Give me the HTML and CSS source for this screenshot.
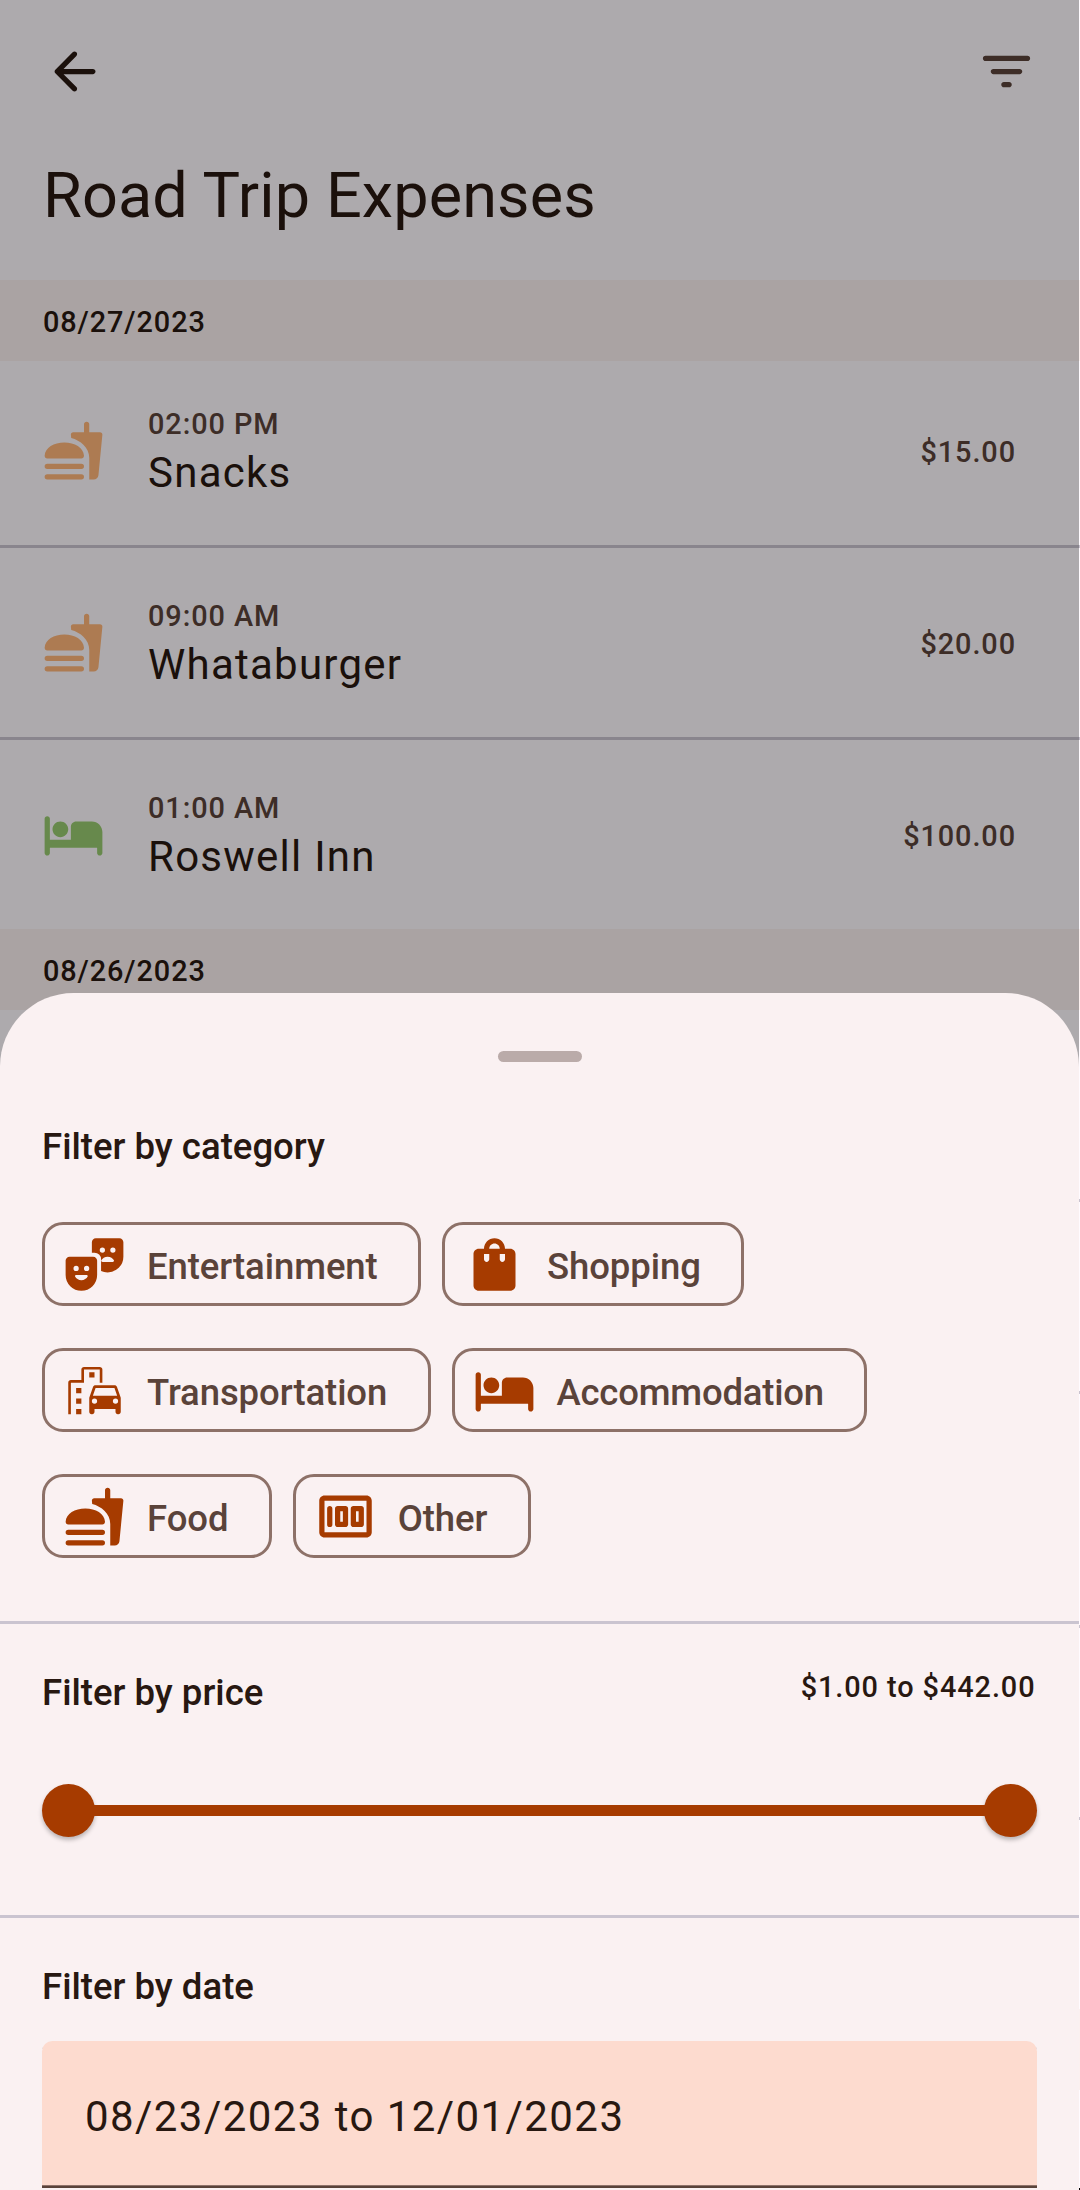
FILE: index.html
```html
<!DOCTYPE html>
<html lang="en">
<head>
<meta charset="utf-8">
<title>Road Trip Expenses</title>
<link rel="stylesheet" href="styles.css">
</head>
<body>
<svg class="sprite" aria-hidden="true">
  <symbol id="back" viewBox="0 0 24 24"><path d="M19 11H7.83l4.88-4.88c.39-.39.39-1.03 0-1.42-.39-.39-1.02-.39-1.41 0l-6.59 6.59c-.39.39-.39 1.02 0 1.41l6.59 6.59c.39.39 1.02.39 1.41 0 .39-.39.39-1.02 0-1.41L7.83 13H19c.55 0 1-.45 1-1s-.45-1-1-1z"/></symbol>
  <symbol id="filter" viewBox="0 0 24 24"><path d="M11 18h2c.55 0 1-.45 1-1s-.45-1-1-1h-2c-.55 0-1 .45-1 1s.45 1 1 1zM3 7c0 .55.45 1 1 1h16c.55 0 1-.45 1-1s-.45-1-1-1H4c-.55 0-1 .45-1 1zm4 6h10c.55 0 1-.45 1-1s-.45-1-1-1H7c-.55 0-1 .45-1 1s.45 1 1 1z"/></symbol>
  <symbol id="food" viewBox="0 0 24 24"><path d="M22.1 5H18V2c0-.55-.45-1-1-1s-1 .45-1 1v3h-4.1c-.55 0-.95.45-.9 1l.13 1.28C14.6 8.2 18 10.9 18 14.9V23h1.7c.95 0 1.7-.7 1.8-1.6L23 6c.05-.55-.35-1-.9-1zM15 15H2c-.6 0-1-.4-1-1 .2-3 3.5-5.01 7.5-5.01S15.8 11 16 14c0 .6-.4 1-1 1zM2 17h13a1 1 0 0 1 0 2H2a1 1 0 0 1 0-2zM2 21h13a1 1 0 0 1 0 2H2a1 1 0 0 1 0-2z"/></symbol>
  <symbol id="bed" viewBox="0 0 24 24"><path d="M7 13c1.65 0 3-1.35 3-3S8.65 7 7 7s-3 1.35-3 3 1.35 3 3 3zm12-6h-6c-1.1 0-2 .9-2 2v5H3V6c0-.55-.45-1-1-1s-1 .45-1 1v13c0 .55.45 1 1 1s1-.45 1-1v-2h18v2c0 .55.45 1 1 1s1-.45 1-1v-8c0-2.21-1.79-4-4-4z"/></symbol>
  <symbol id="masks" viewBox="0 0 24 24"><path fill-rule="evenodd" d="M2.5 9h9c.83 0 1.500.67 1.500 1.500V16a6 6 0 0 1-12 0v-5.500C1 9.670 1.670 9 2.500 9zM5 12.500a1 1 0 1 0 0 2 1 1 0 0 0 0-2zm4 0a1 1 0 1 0 0 2 1 1 0 0 0 0-2zM5.100 16c-.4 0-.6.300-.5.600.4.800 1.300 1.400 2.400 1.400s2-.6 2.400-1.400c.1-.3-.1-.6-.5-.6zM12.500 2h9c.83 0 1.500.67 1.500 1.500V9a6 6 0 0 1-6 6c-.9 0-1.760-.2-2.500-.55V10a2.500 2.500 0 0 0-2.500-2.500h-1v-4c0-.83.67-1.500 1.500-1.500zM15 5.500a1 1 0 1 0 0 2 1 1 0 0 0 0-2zm4 0a1 1 0 1 0 0 2 1 1 0 0 0 0-2zM15.100 11h3.800c.4 0 .6-.3.500-.6-.4-.8-1.300-1.400-2.400-1.400s-2 .6-2.400 1.400c-.1.300.1.600.5.600z"/></symbol>
  <symbol id="bag" viewBox="0 0 24 24"><path d="M18 6h-2c0-2.21-1.79-4-4-4S8 3.79 8 6H6c-1.1 0-2 .9-2 2v12c0 1.1.9 2 2 2h12c1.1 0 2-.9 2-2V8c0-1.100-.9-2-2-2zm-8 4c0 .55-.45 1-1 1s-1-.45-1-1V8h2v2zm2-6c1.100 0 2 .9 2 2h-4c0-1.100.9-2 2-2zm4 6c0 .55-.45 1-1 1s-1-.45-1-1V8h2v2z"/></symbol>
  <symbol id="transport" viewBox="0 0 24 24"><path fill-rule="evenodd" d="M20.57 10.66c-.14-.4-.52-.66-.97-.66h-7.190c-.46 0-.83.26-.98.66L10 14.770V20.100c0 .5.400.900.900.900h.200c.5 0 .9-.4.9-.9V19h8v1.100c0 .5.400.900.900.900h.200c.5 0 .9-.4.9-.9v-5.330zM12.410 11h7.190l1.030 3h-9.250zM12 15a1 1 0 1 1 0 2 1 1 0 0 1 0-2zm8 0a1 1 0 1 1 0 2 1 1 0 0 1 0-2z"/><path d="M14 9h1V4c0-.55-.45-1-1-1H8c-.55 0-1 .45-1 1v4H3c-.55 0-1 .45-1 1v12h1V9h5V4h6zM5 11h2v2H5zm5-6h2v2h-2zM5 15h2v2H5zm0 4h2v2H5z"/></symbol>
  <symbol id="cash" viewBox="0 0 24 24"><path fill-rule="evenodd" d="M4 4h16c1.100 0 2 .9 2 2v12c0 1.100-.9 2-2 2H4c-1.100 0-2-.9-2-2V6c0-1.100.9-2 2-2zm0 2v12h16V6zM6 8c.55 0 1 .45 1 1v6a1 1 0 0 1-2 0V9c0-.55.45-1 1-1zM9 8h3c.55 0 1 .45 1 1v6c0 .55-.45 1-1 1H9c-.55 0-1-.45-1-1V9c0-.55.45-1 1-1zm1 2v4h1v-4zM15 8h3c.55 0 1 .45 1 1v6c0 .55-.45 1-1 1h-3c-.55 0-1-.45-1-1V9c0-.55.45-1 1-1zm1 2v4h1v-4z"/></symbol>
</svg>

<main class="app">
  <header class="top">
    <div class="actions">
      <svg class="icon"><use href="#back"/></svg>
      <svg class="icon muted"><use href="#filter"/></svg>
    </div>
    <h1 class="title">Road Trip Expenses</h1>
  </header>
  <h2 class="day pinned">08/27/2023</h2>
  <article class="row first">
    <svg class="icon orange"><use href="#food"/></svg>
    <div class="entry"><span class="time">02:00 PM</span><span class="name">Snacks</span></div>
    <span class="amount">$15.00</span>
  </article>
  <article class="row divided">
    <svg class="icon orange"><use href="#food"/></svg>
    <div class="entry"><span class="time">09:00 AM</span><span class="name">Whataburger</span></div>
    <span class="amount">$20.00</span>
  </article>
  <article class="row divided">
    <svg class="icon green"><use href="#bed"/></svg>
    <div class="entry"><span class="time">01:00 AM</span><span class="name">Roswell Inn</span></div>
    <span class="amount">$100.00</span>
  </article>
  <h2 class="day">08/26/2023</h2>
  <div class="row"></div>
  <div class="row divided"></div>
  <div class="row divided tall"></div>
  <div class="row divided"></div>
  <div class="row divided"></div>
  <div class="day"></div>
  <div class="nav-edge"></div>
</main>

<div class="scrim"></div>

<section class="sheet">
  <div class="handle"></div>
  <div class="section categories">
    <h3 class="label">Filter by category</h3>
    <div class="chips">
      <div class="chip-row">
        <button class="chip"><svg class="icon"><use href="#masks"/></svg><span>Entertainment</span></button>
        <button class="chip"><svg class="icon"><use href="#bag"/></svg><span>Shopping</span></button>
      </div>
      <div class="chip-row">
        <button class="chip"><svg class="icon"><use href="#transport"/></svg><span>Transportation</span></button>
        <button class="chip long"><svg class="icon"><use href="#bed"/></svg><span>Accommodation</span></button>
      </div>
      <div class="chip-row">
        <button class="chip"><svg class="icon"><use href="#food"/></svg><span>Food</span></button>
        <button class="chip"><svg class="icon"><use href="#cash"/></svg><span>Other</span></button>
      </div>
    </div>
  </div>
  <div class="section price">
    <div class="price-head">
      <h3 class="label">Filter by price</h3>
      <span class="range">$1.00 to $442.00</span>
    </div>
    <div class="slider"><i class="thumb"></i><i class="track"></i><i class="thumb"></i></div>
  </div>
  <div class="section date">
    <h3 class="label">Filter by date</h3>
    <div class="field">08/23/2023 to 12/01/2023</div>
  </div>
</section>
</body>
</html>
```
FILE: styles.css
```css
* { box-sizing: border-box; margin: 0; padding: 0; }

body {
  position: relative;
  width: 1080px;
  height: 2190px;
  overflow: hidden;
  background: #fffbff;
  color: #281811;
  font-family: Roboto, "Liberation Sans", sans-serif;
}

.sprite { display: none; }

.icon {
  display: block;
  flex: none;
  width: 63px;
  height: 63px;
  fill: currentColor;
}

.muted { color: #5a433a; }
.orange { color: #ffb679; }
.green { color: #99cb70; }

.app {
  display: flex;
  flex-direction: column;
  height: 2190px;
  isolation: isolate;
}

.top { flex: none; height: 280px; padding-top: 40px; }
.actions { display: flex; justify-content: space-between; padding: 0 42px 0 43px; }

.title {
  margin: 53px 0 0 43px;
  font-size: 63px;
  font-weight: 400;
  line-height: 80px;
  letter-spacing: .1px;
}

.day {
  flex: none;
  height: 81px;
  padding: 2px 43px 0;
  background: #fbf1f0;
  font-size: 28.875px;
  font-weight: 500;
  line-height: 81px;
  letter-spacing: .9px;
}
.pinned { position: relative; z-index: 1; }

.row {
  display: flex;
  flex: none;
  align-items: center;
  height: 189px;
  padding: 0 63px 0 42px;
}
.row.first { margin-top: -5px; }
.row.divided { height: 192px; border-top: 3px solid #cac4d0; }
.row.tall { height: 234px; }

.entry {
  display: flex;
  flex: 1;
  flex-direction: column;
  padding: 0 0 6px 43px;
}
.time { line-height: 50px; }
.name { line-height: 47px; }
.time, .amount {
  color: #5a433a;
  font-size: 28.875px;
  font-weight: 500;
  letter-spacing: .92px;
}
.amount { padding: 3px 1px 0 0; }
.name { font-size: 42px; letter-spacing: 1.25px; }

.nav-edge { height: 2px; margin-top: auto; background: #000; }

.scrim {
  position: absolute;
  top: 0;
  left: 0;
  width: 1079px;
  height: 2190px;
  background: rgba(0, 0, 0, .32);
}

.sheet {
  position: absolute;
  top: 993px;
  left: 0;
  width: 1079px;
  height: 1197px;
  padding-top: 58px;
  border-radius: 73.5px 73.5px 0 0;
  background: #faf1f2;
}

.handle {
  width: 84px;
  height: 10.5px;
  margin: 0 auto;
  border-radius: 6px;
  background: #baaba9;
}

.section { padding: 0 42px; }
.categories { height: 559.5px; padding-top: 59px; }
.label {
  font-size: 36.6px;
  font-weight: 500;
  line-height: 52px;
  letter-spacing: -.01px;
}

.chips { display: grid; gap: 42px; margin-top: 49.5px; }
.chip-row { display: flex; gap: 21px; }
.chip {
  display: flex;
  align-items: center;
  gap: 21px;
  height: 84px;
  padding: 0 40.3px 0 18px;
  border: 3px solid #8d7168;
  border-radius: 21px;
  background: none;
  color: #5a433a;
  font: 500 36.5px/52px Roboto, "Liberation Sans", sans-serif;
  letter-spacing: -.08px;
}
.chip.long { letter-spacing: -.2px; }
.chip .icon { color: #a63b00; }
.chip span { padding-top: 6px; }

.price, .date { border-top: 3px solid #cac4d0; padding-top: 42.5px; }
.price { height: 294px; }
.price-head { display: flex; align-items: flex-start; justify-content: space-between; }
.range {
  padding-right: 1.5px;
  font-size: 28.875px;
  font-weight: 500;
  line-height: 41px;
  letter-spacing: .92px;
}

.slider { display: flex; align-items: center; margin-top: 65px; }
.thumb {
  width: 53px;
  height: 53px;
  border-radius: 50%;
  background: #a63b00;
  box-shadow: 0 3px 4px rgba(0, 0, 0, .25);
}
.track { flex: 1; height: 11px; margin: 0 -5px; background: #a63b00; z-index: 1; }

.field {
  height: 147px;
  margin-top: 28.5px;
  padding: 44px 42px 0 43px;
  border-radius: 10.5px 10.5px 0 0;
  background: #fddbcf;
  box-shadow: inset 0 -2px #5a433a, inset 0 -3px #8f726a;
  font-size: 42px;
  line-height: 63px;
  letter-spacing: 1.43px;
}
```
